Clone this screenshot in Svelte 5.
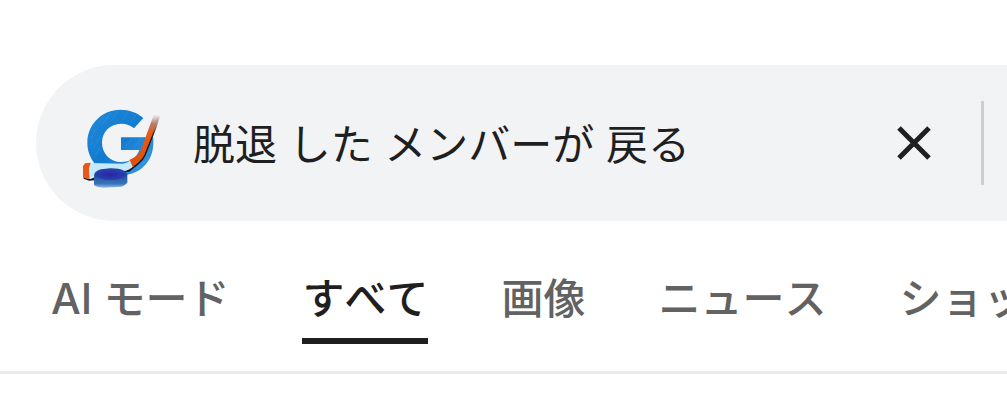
<script lang="ts">
  let query = $state('脱退 した メンバーが 戻る');
  let selected = $state('all');

  const tabs = [
    { id: 'ai', label: 'AI モード' },
    { id: 'all', label: 'すべて' },
    { id: 'images', label: '画像' },
    { id: 'news', label: 'ニュース' },
    { id: 'shopping', label: 'ショッピング' }
  ];
</script>

<div class="page">
  <form class="search-bar" role="search" onsubmit={(e) => e.preventDefault()}>
    <a class="logo" href="#home" aria-label="Google">
      <svg width="80" height="90" viewBox="36 9 240 270" aria-hidden="true">
        <defs>
          <linearGradient id="ring" x1="0" y1="0" x2="1" y2="1">
            <stop offset="0" stop-color="#2089da" />
            <stop offset="0.5" stop-color="#127bd0" />
            <stop offset="1" stop-color="#3f9be0" />
          </linearGradient>
          <linearGradient id="stick" x1="0" y1="0" x2="0" y2="1">
            <stop offset="0" stop-color="#b9a49d" stop-opacity="0" />
            <stop offset="0.18" stop-color="#b6806b" />
            <stop offset="0.36" stop-color="#ea5a12" />
            <stop offset="1" stop-color="#e04e08" />
          </linearGradient>
          <linearGradient id="edge" x1="0" y1="0" x2="0" y2="1">
            <stop offset="0" stop-color="#4a3a38" stop-opacity="0" />
            <stop offset="0.3" stop-color="#241a1a" />
            <stop offset="1" stop-color="#17171c" />
          </linearGradient>
          <linearGradient id="puck" x1="0" y1="0" x2="0" y2="1">
            <stop offset="0" stop-color="#1d3f9c" />
            <stop offset="0.5" stop-color="#2a5cab" />
            <stop offset="0.8" stop-color="#3c74b8" />
            <stop offset="1" stop-color="#8fbde4" />
          </linearGradient>
          <radialGradient id="puck-top">
            <stop offset="0" stop-color="#2a249f" />
            <stop offset="0.6" stop-color="#2a35ae" />
            <stop offset="1" stop-color="#2446a6" />
          </radialGradient>
        </defs>
        <path
          fill="url(#ring)"
          d="M220 69C202 53 178 44 151 44C96 44 52 88 52 143C52 198 96 241 151 241C208 241 250 201 250 143L250 127H153V165H208C201 187 180 201 153 201C120 201 96 175 96 143C96 111 120 86 153 86C169 86 183 92 192 100Z"
        />
        <g fill="none" stroke="#69b7ef" stroke-width="2" opacity="0.3">
          <path d="M62 132L78 102M68 165L89 125M75 182L91 157M88 82L102 66M96 88L122 54M126 73L142 50M158 77L174 51M181 82L198 61M166 155L186 132M192 157L213 131M219 158L238 130M218 194L240 164M200 219L226 197M61 154L69 139M109 73L117 62" />
        </g>
        <path fill="url(#edge)" d="M270 66L260 96L228 179Q222 194 206 208L178 230L162 231L206 202L222 181L263 65Z" />
        <path fill="#19191d" d="M41 248L61 252L74 247V256L57 257L41 251Z" />
        <path fill="#c5e9ff" d="M59 204L157 206Q174 205 181 195L191 213Q177 228 157 229L72 242L60 248Z" />
        <path fill="#e95816" d="M45 205L62 203L57 220L59 251L39 248V213Z" />
        <path fill="url(#stick)" d="M252 57L270 62L222 181Q215 196 188 216L179 194Q203 184 211 170Z" />
        <path fill="url(#puck)" d="M72 242Q73 229 92 223L122 220L145 221Q169 226 172 238V262Q168 270 154 275L99 278Q80 276 72 270Z" />
        <ellipse cx="122" cy="239" rx="48" ry="16" fill="url(#puck-top)" />
      </svg>
    </a>
    <input class="query" type="text" aria-label="検索" bind:value={query} />
    <button class="clear" type="button" aria-label="クリア" onclick={() => (query = '')}>
      <svg width="36" height="36" viewBox="0 0 36 36" aria-hidden="true">
        <path d="M3 3L33 33M33 3L3 33" fill="none" stroke="#1f1f1f" stroke-width="5" />
      </svg>
    </button>
    <span class="separator"></span>
  </form>

  <nav class="tabs" aria-label="検索モード">
    {#each tabs as tab}
      <a
        href="#{tab.id}"
        class="tab"
        class:selected={selected === tab.id}
        aria-current={selected === tab.id ? 'page' : undefined}
        onclick={() => (selected = tab.id)}
      >
        {tab.label}
      </a>
    {/each}
  </nav>
</div>

<style>
  :global(body) {
    background: #fff;
  }

  .page {
    overflow: hidden;
    padding-top: 65px;
    font-family: 'Liberation Sans', 'Noto Sans CJK JP', sans-serif;
    font-size: 42px;
    font-kerning: none;
  }

  .search-bar {
    display: flex;
    align-items: center;
    margin-left: 36px;
    padding: 33px 23px 33px 46px;
    border-radius: 78px 0 0 78px;
    background: #f2f3f5;
  }

  .logo {
    display: flex;
    flex: none;
  }

  .logo svg,
  .clear svg {
    display: block;
  }

  .query {
    flex: 1;
    min-width: 0;
    height: 70px;
    margin-left: 31px;
    padding: 0 0 4px;
    border: 0;
    outline: 0;
    background: transparent;
    color: #1f1f1f;
    font: inherit;
    font-kerning: none;
  }

  .clear {
    flex: none;
    margin: 0 41px 0 24px;
    padding: 8px;
    border: 0;
    background: transparent;
    cursor: pointer;
  }

  .separator {
    flex: none;
    width: 3px;
    height: 84px;
    background: #cdced0;
  }

  .tabs {
    display: flex;
    gap: 73px;
    margin-top: 48px;
    padding: 0 51px 27px;
    border-bottom: 3px solid #ebebed;
    font-family: Inter, 'Noto Sans CJK JP', sans-serif;
  }

  .tab {
    flex: none;
    padding-bottom: 9px;
    border-bottom: 6px solid transparent;
    color: #626262;
    font-weight: 500;
    line-height: 60px;
    text-decoration: none;
    white-space: nowrap;
  }

  .tab.selected {
    border-bottom-color: #1f1f1f;
    color: #1f1f1f;
  }
</style>
